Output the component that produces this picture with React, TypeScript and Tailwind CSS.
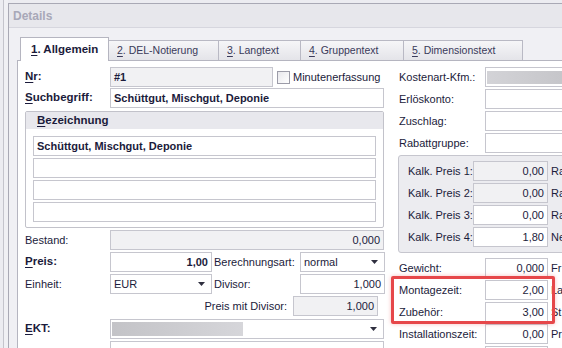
import React from 'react';
import clsx from 'clsx';

const txt = 'text-[#1b1b3b]';

const Arrow: React.FC = () => (
  <svg width="7" height="4" viewBox="0 0 7 4" className="shrink-0">
    <path d="M0 0h7L3.5 4z" fill="#2f2f3f" />
  </svg>
);

type BoxProps = {
  w: string;
  gray?: boolean;
  right?: boolean;
  bold?: boolean;
  select?: boolean;
  children?: React.ReactNode;
};

const Box: React.FC<BoxProps> = ({ w, gray, right, bold, select, children }) => (
  <div
    className={clsx(
      'h-[20px] border border-[#c6c6ce] flex items-center shrink-0 overflow-hidden px-[3px] text-[11px] leading-none',
      w,
      gray ? 'bg-[#f1f1f3]' : 'bg-white',
      right ? 'justify-end' : 'justify-between',
      bold && 'font-bold text-[11.5px]',
      txt
    )}
  >
    <span className="whitespace-nowrap">{children}</span>
    {select && <span className="mr-[3px]"><Arrow /></span>}
  </div>
);

const Label: React.FC<{ w: string; bold?: boolean; className?: string; children: React.ReactNode }> = ({
  w,
  bold,
  className,
  children,
}) => (
  <div
    className={clsx(
      'shrink-0 whitespace-nowrap leading-none',
      w,
      bold ? 'font-bold text-[11.5px]' : 'text-[11px]',
      txt,
      className
    )}
  >
    {children}
  </div>
);

const U: React.FC<{ children: React.ReactNode }> = ({ children }) => (
  <span className="underline underline-offset-[2px]">{children}</span>
);

const tabs = [
  { n: '2', t: 'DEL-Notierung', w: 'w-[110px]' },
  { n: '3', t: 'Langtext', w: 'w-[82px]' },
  { n: '4', t: 'Gruppentext', w: 'w-[103px]' },
  { n: '5', t: 'Dimensionstext', w: 'w-[119px]' },
];

const kalk = [
  { l: 'Kalk. Preis 1:', v: '0,00', gray: true, s: 'Ra' },
  { l: 'Kalk. Preis 2:', v: '0,00', gray: true, s: 'Ra' },
  { l: 'Kalk. Preis 3:', v: '0,00', gray: false, s: 'Ra' },
  { l: 'Kalk. Preis 4:', v: '1,80', gray: false, s: 'Ne' },
];

const App: React.FC = () => {
  return (
    <div className="w-[562px] h-[348px] overflow-hidden bg-[#ececf1] flex font-['Liberation_Sans',Arial,sans-serif]">
      {/* left edge strip */}
      <div className="w-[3px] shrink-0" />
      <div className="w-px shrink-0 bg-[#c4c4cc]" />
      <div className="w-[4px] shrink-0 bg-[#f0f0f4]" />

      {/* window */}
      <div className="flex-1 mt-[3px] border-t border-l border-[#a9a9b5] bg-[#f0f0f4] flex flex-col min-w-0">
        <div className="h-[24px] shrink-0 bg-[#e7e7ec] border-b border-[#d6d6de] pl-[4px] flex items-center">
          <span className="text-[12px] font-bold text-[#a8a8b8] leading-none">Details</span>
        </div>

        <div className="ml-[8px] mt-[8px] flex flex-col flex-1 min-h-0">
          {/* tabs */}
          <div className="flex items-end pl-[3px] h-[24px] shrink-0">
            <div className="w-[89px] h-[24px] -mb-px relative z-10 bg-white border-l border-t border-r border-[#b5b5c0] flex items-center pl-[10px]">
              <span className={clsx('text-[11.5px] font-bold leading-none', txt)}>
                <U>1</U>. Allgemein
              </span>
            </div>
            {tabs.map((tab) => (
              <div
                key={tab.n}
                className={clsx(
                  'h-[20px] border-t border-r border-[#b9b9c4] bg-gradient-to-b from-[#f6f6f8] to-[#e4e4e9] flex items-center pl-[8px]',
                  tab.w
                )}
              >
                <span className="text-[10.5px] leading-none text-[#3a3a5a] whitespace-nowrap">
                  <U>{tab.n}</U>. {tab.t}
                </span>
              </div>
            ))}
          </div>

          {/* panel */}
          <div className="flex-1 bg-white border-t border-l border-[#b5b5c0] flex pt-[6px] pl-[7px]">
            {/* left column */}
            <div className="w-[359px] shrink-0 flex flex-col">
              <div className="flex items-center h-[20px]">
                <Label w="w-[85px]" bold>
                  <U>N</U>r:
                </Label>
                <Box w="w-[163px]" gray bold>
                  #1
                </Box>
                <div className="ml-[4px] w-[13px] h-[13px] border border-[#9c9ca8] bg-gradient-to-br from-[#e8e8ec] to-white shrink-0" />
                <Label w="w-auto" className="ml-[3px]">
                  Minutenerfassung
                </Label>
              </div>
              <div className="flex items-center h-[20px] mt-px">
                <Label w="w-[85px]" bold>
                  <U>S</U>uchbegriff:
                </Label>
                <Box w="w-[274px]" bold>
                  Schüttgut, Mischgut, Deponie
                </Box>
              </div>

              {/* Bezeichnung group */}
              <div className="mt-[3px] w-[359px] border border-[#c2c2ca] rounded-[2px] flex flex-col">
                <div className="h-[17px] bg-[#e8e8ed] flex items-center pl-[11px]">
                  <Label w="w-auto" bold>
                    <U>B</U>ezeichnung
                  </Label>
                </div>
                <div className="pt-[7px] pb-[5px] pl-[7px] flex flex-col gap-[2px]">
                  <Box w="w-[343px]" bold>
                    Schüttgut, Mischgut, Deponie
                  </Box>
                  <Box w="w-[343px]" />
                  <Box w="w-[343px]" />
                  <Box w="w-[343px]" />
                </div>
              </div>

              <div className="flex items-center h-[20px] mt-[2px]">
                <Label w="w-[85px]">Bestand:</Label>
                <Box w="w-[274px]" gray right>
                  0,000
                </Box>
              </div>
              <div className="flex items-center h-[20px] mt-[2px]">
                <Label w="w-[85px]" bold>
                  <U>P</U>reis:
                </Label>
                <Box w="w-[102px]" right bold>
                  1,00
                </Box>
                <Label w="w-[86px]" className="ml-[2px]">
                  Berechnungsart:
                </Label>
                <Box w="w-[85px]" select>
                  normal
                </Box>
              </div>
              <div className="flex items-center h-[20px] mt-[2px]">
                <Label w="w-[85px]">Einheit:</Label>
                <Box w="w-[102px]" select>
                  EUR
                </Box>
                <Label w="w-[86px]" className="ml-[2px]">
                  Divisor:
                </Label>
                <Box w="w-[85px]" right>
                  1,000
                </Box>
              </div>
              <div className="flex items-center h-[20px] mt-[2px]">
                <Label w="w-[268px]" className="text-right pr-[6px]">
                  Preis mit Divisor:
                </Label>
                <Box w="w-[85px]" gray right>
                  1,000
                </Box>
              </div>
              <div className="flex items-center h-[20px] mt-[3px]">
                <Label w="w-[85px]" bold>
                  <U>E</U>KT:
                </Label>
                <div className="w-[274px] h-[20px] border border-[#c6c6ce] bg-white flex items-center justify-between pl-px pr-[6px]">
                  <div className="w-[131px] h-[14px] bg-gradient-to-r from-[#c3c3c7] to-[#d6d6da]" />
                  <Arrow />
                </div>
              </div>
              <div className="flex items-start h-[20px] mt-[2px]">
                <div className="w-[85px] shrink-0" />
                <div className="w-[274px] h-[20px] border border-[#c6c6ce] bg-white pl-[3px] pt-px">
                  <span className={clsx('text-[11px] leading-none whitespace-nowrap', txt)}>
                    205-5000-0000-000 Materialkosten Allg.
                  </span>
                </div>
              </div>
            </div>

            {/* right column */}
            <div className="ml-[14px] flex-1 flex flex-col min-w-0">
              <div className="flex items-center h-[20px] pl-px">
                <Label w="w-[86px]">Kostenart-Kfm.:</Label>
                <div className="w-[100px] h-[20px] border border-[#c6c6ce] bg-white pl-px flex items-center shrink-0">
                  <div className="w-full h-[13px] bg-gradient-to-r from-[#d3d3d7] to-[#c2c2c6]" />
                </div>
              </div>
              {['Erlöskonto:', 'Zuschlag:', 'Rabattgruppe:'].map((l) => (
                <div key={l} className="flex items-center h-[20px] pl-px mt-[2px]">
                  <Label w="w-[86px]">{l}</Label>
                  <Box w="w-[100px]" />
                </div>
              ))}

              {/* Kalk group */}
              <div className="mt-[2px] w-[180px] border border-[#c6c6ce] rounded-[3px] bg-[#ececf0] pt-[5px] pb-[5px] pl-[9px] flex flex-col gap-[2px]">
                {kalk.map((k) => (
                  <div key={k.l} className="flex items-center h-[20px]">
                    <Label w="w-[65px]">{k.l}</Label>
                    <Box w="w-[75px]" gray={k.gray} right>
                      {k.v}
                    </Box>
                    <Label w="w-auto" className="ml-[3px]">
                      {k.s}
                    </Label>
                  </div>
                ))}
              </div>

              <div className="flex items-center h-[20px] pl-px mt-[5px]">
                <Label w="w-[86px]">Gewicht:</Label>
                <Box w="w-[63px]" right>
                  0,000
                </Box>
                <Label w="w-auto" className="ml-[3px]">
                  Fr
                </Label>
              </div>

              <div className="relative mt-[2px] flex flex-col gap-[2px]">
                <div className="flex items-center h-[20px] pl-px">
                  <Label w="w-[86px]">Montagezeit:</Label>
                  <Box w="w-[63px]" right>
                    2,00
                  </Box>
                  <Label w="w-auto" className="ml-[3px]">
                    La
                  </Label>
                </div>
                <div className="flex items-center h-[20px] pl-px">
                  <Label w="w-[86px]">Zubehör:</Label>
                  <Box w="w-[63px]" right>
                    3,00
                  </Box>
                  <Label w="w-auto" className="ml-[3px]">
                    St
                  </Label>
                </div>
                {/* highlight */}
                <div className="absolute left-[-7px] top-[-4px] w-[164px] h-[48px] border-[3px] border-[#e6474a] rounded-[2px] shadow-[0_0_4px_rgba(230,71,74,0.35)]" />
              </div>

              <div className="flex items-center h-[20px] pl-px mt-[2px]">
                <Label w="w-[86px]">Installationszeit:</Label>
                <Box w="w-[63px]" right>
                  0,00
                </Box>
                <Label w="w-auto" className="ml-[3px]">
                  Pr
                </Label>
              </div>
              <div className="flex items-center h-[20px] pl-px mt-[2px]">
                <div className="w-[86px] shrink-0" />
                <Box w="w-[63px]" />
              </div>
            </div>
          </div>
        </div>
      </div>
    </div>
  );
};

export default App;
